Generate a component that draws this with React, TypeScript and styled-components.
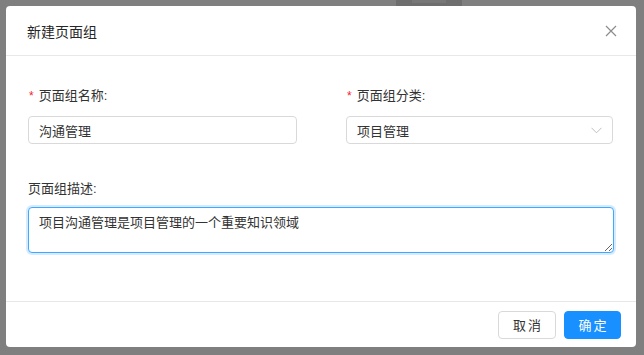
import React from "react";
import styled, { createGlobalStyle } from "styled-components";

const Global = createGlobalStyle`
  html, body { margin: 0; padding: 0; }
  body {
    background: #7f7f7f;
    font-family: "Liberation Sans", "Noto Sans CJK SC", sans-serif;
    width: 644px;
    height: 355px;
    overflow: hidden;
  }
`;

const Overlay = styled.div`
  position: relative;
  width: 644px;
  height: 355px;
  box-sizing: border-box;
  padding: 6px 8px 8px 6px;
  background: #7f7f7f;
`;

const BehindShape = styled.svg`
  position: absolute;
  left: 396px;
  top: 0;
`;

const Modal = styled.div`
  position: relative;
  width: 630px;
  height: 341px;
  background: #fff;
  border-radius: 4px;
  display: flex;
  flex-direction: column;
  overflow: hidden;
`;

const Header = styled.div`
  height: 50px;
  flex: none;
  box-sizing: border-box;
  border-bottom: 1px solid #e8e8e8;
  display: flex;
  align-items: center;
  justify-content: space-between;
  padding: 0 19px 0 21px;
`;

const Title = styled.div`
  font-size: 14px;
  color: #262626;
`;

const CloseBtn = styled.button`
  border: 0;
  background: none;
  padding: 0;
  width: 12px;
  height: 12px;
  display: flex;
  cursor: pointer;
`;

const Body = styled.div`
  flex: 1;
  padding: 30px 22px 0 22px;
  display: flex;
  flex-direction: column;
`;

const Row = styled.div`
  display: grid;
  grid-template-columns: 269px 267px;
  column-gap: 49px;
`;

const Field = styled.div`
  display: flex;
  flex-direction: column;
`;

const Label = styled.label<{ $gap: number }>`
  font-size: 13px;
  line-height: 20px;
  color: #333;
  display: flex;
  align-items: center;
  margin-bottom: ${(p) => p.$gap}px;
`;

const Star = styled.span`
  color: #f5222d;
  font-size: 12px;
  margin: 0 5px 0 1px;
  font-family: "Liberation Sans", sans-serif;
`;

const Input = styled.div`
  height: 28px;
  box-sizing: border-box;
  border: 1px solid #d9d9d9;
  border-radius: 4px;
  padding: 0 10px;
  font-size: 13px;
  color: #333;
  display: flex;
  align-items: center;
  justify-content: space-between;
`;

const DescBlock = styled.div`
  margin-top: 35px;
  display: flex;
  flex-direction: column;
`;

const TextArea = styled.textarea`
  width: 586px;
  height: 46px;
  box-sizing: border-box;
  border: 1px solid #40a9ff;
  border-radius: 4px;
  box-shadow: 0 0 0 2px rgba(24, 144, 255, 0.18);
  padding: 5px 10px;
  font-family: "Liberation Sans", "Noto Sans CJK SC", sans-serif;
  font-size: 13px;
  line-height: 20px;
  color: #333;
  outline: none;
  resize: vertical;
  margin: 0;
`;

const Footer = styled.div`
  height: 46px;
  flex: none;
  box-sizing: border-box;
  border-top: 1px solid #e8e8e8;
  display: flex;
  align-items: center;
  justify-content: flex-end;
  gap: 8px;
  padding: 0 15px 0 0;
`;

const Button = styled.button<{ $primary?: boolean }>`
  height: 28px;
  width: ${(p) => (p.$primary ? 57 : 58)}px;
  border-radius: 4px;
  font-family: "Liberation Sans", "Noto Sans CJK SC", sans-serif;
  font-size: 13px;
  letter-spacing: 2px;
  padding: 0 0 0 2px;
  cursor: pointer;
  border: 1px solid ${(p) => (p.$primary ? "#1890ff" : "#d9d9d9")};
  background: ${(p) => (p.$primary ? "#1890ff" : "#fff")};
  color: ${(p) => (p.$primary ? "#fff" : "#333")};
`;

export default function App() {
  return (
    <>
      <Global />
      <Overlay>
        <BehindShape width="66" height="6" viewBox="0 0 66 6">
          <rect x="0" y="0" width="66" height="6" fill="#6e6e6e" />
          <rect x="16" y="0" width="34" height="3" fill="#777" />
        </BehindShape>
        <Modal>
          <Header>
            <Title>新建页面组</Title>
            <CloseBtn aria-label="close">
              <svg width="12" height="12" viewBox="0 0 12 12">
                <path d="M1 1 L11 11 M11 1 L1 11" stroke="#8c8c8c" strokeWidth="1.2" fill="none" />
              </svg>
            </CloseBtn>
          </Header>
          <Body>
            <Row>
              <Field>
                <Label $gap={10}>
                  <Star>*</Star>页面组名称:
                </Label>
                <Input>沟通管理</Input>
              </Field>
              <Field>
                <Label $gap={10}>
                  <Star>*</Star>页面组分类:
                </Label>
                <Input>
                  项目管理
                  <svg width="11" height="7" viewBox="0 0 11 7">
                    <path d="M0.5 0.8 L5.5 5.8 L10.5 0.8" stroke="#bfbfbf" strokeWidth="1" fill="none" />
                  </svg>
                </Input>
              </Field>
            </Row>
            <DescBlock>
              <Label $gap={8}>页面组描述:</Label>
              <TextArea autoFocus defaultValue="项目沟通管理是项目管理的一个重要知识领域" />
            </DescBlock>
          </Body>
          <Footer>
            <Button>取消</Button>
            <Button $primary>确定</Button>
          </Footer>
        </Modal>
      </Overlay>
    </>
  );
}
